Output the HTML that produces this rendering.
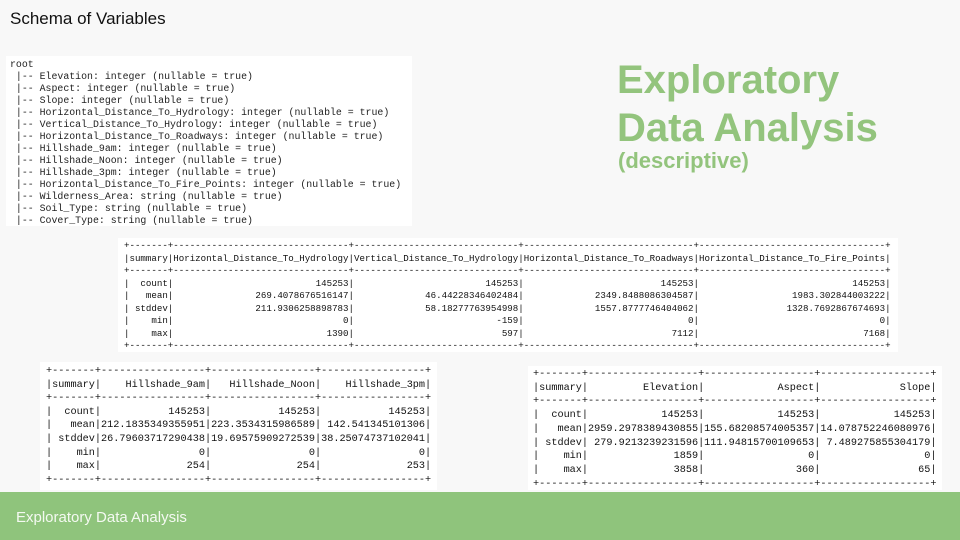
<!DOCTYPE html>
<html><head><meta charset="utf-8"><style>
body{margin:0;width:960px;height:540px;background:#f8f8f8;position:relative;overflow:hidden;font-family:"Liberation Sans",sans-serif}
.a{position:absolute}
pre{margin:0;font-family:"Liberation Mono",monospace;color:#111;white-space:pre}
.box{position:absolute;background:#fff}
</style></head><body>
<div class="a" style="left:10px;top:9px;font-size:17px;color:#111">Schema of Variables</div>
<div class="box" style="left:6px;top:56px;width:406px;height:170px"></div>
<pre class="a" style="left:10px;top:59px;font-size:9.9px;line-height:12px;color:#222">root
 |-- Elevation: integer (nullable = true)
 |-- Aspect: integer (nullable = true)
 |-- Slope: integer (nullable = true)
 |-- Horizontal_Distance_To_Hydrology: integer (nullable = true)
 |-- Vertical_Distance_To_Hydrology: integer (nullable = true)
 |-- Horizontal_Distance_To_Roadways: integer (nullable = true)
 |-- Hillshade_9am: integer (nullable = true)
 |-- Hillshade_Noon: integer (nullable = true)
 |-- Hillshade_3pm: integer (nullable = true)
 |-- Horizontal_Distance_To_Fire_Points: integer (nullable = true)
 |-- Wilderness_Area: string (nullable = true)
 |-- Soil_Type: string (nullable = true)
 |-- Cover_Type: string (nullable = true)</pre>
<div class="a" style="left:617px;top:56px;font-size:40px;font-weight:bold;color:#93c47d;line-height:48px">Exploratory<br>Data Analysis</div>
<div class="a" style="left:618px;top:148px;font-size:22px;font-weight:bold;color:#93c47d">(descriptive)</div>

<div class="box" style="left:118px;top:238px;width:780px;height:114px"></div>
<pre class="a" style="left:124px;top:240px;font-size:9.15px;line-height:12.5px">+-------+--------------------------------+------------------------------+-------------------------------+----------------------------------+
|summary|Horizontal_Distance_To_Hydrology|Vertical_Distance_To_Hydrology|Horizontal_Distance_To_Roadways|Horizontal_Distance_To_Fire_Points|
+-------+--------------------------------+------------------------------+-------------------------------+----------------------------------+
|  count|                          145253|                        145253|                         145253|                            145253|
|   mean|               269.4078676516147|             46.44228346402484|             2349.8488086304587|                 1983.302844003222|
| stddev|               211.9306258898783|             58.18277763954998|             1557.8777746404062|                1328.7692867674693|
|    min|                               0|                          -159|                              0|                                 0|
|    max|                            1390|                           597|                           7112|                              7168|
+-------+--------------------------------+------------------------------+-------------------------------+----------------------------------+</pre>

<div class="box" style="left:40px;top:362px;width:397px;height:128px"></div>
<pre class="a" style="left:46px;top:365px;font-size:10.2px;line-height:13.6px">+-------+-----------------+-----------------+-----------------+
|summary|    Hillshade_9am|   Hillshade_Noon|    Hillshade_3pm|
+-------+-----------------+-----------------+-----------------+
|  count|           145253|           145253|           145253|
|   mean|212.1835349355951|223.3534315986589| 142.541345101306|
| stddev|26.79603717290438|19.69575909272539|38.25074737102041|
|    min|                0|                0|                0|
|    max|              254|              254|              253|
+-------+-----------------+-----------------+-----------------+</pre>

<div class="box" style="left:528px;top:366px;width:414px;height:124px"></div>
<pre class="a" style="left:533px;top:368px;font-size:10.2px;line-height:13.7px">+-------+------------------+------------------+------------------+
|summary|         Elevation|            Aspect|             Slope|
+-------+------------------+------------------+------------------+
|  count|            145253|            145253|            145253|
|   mean|2959.2978389430855|155.68208574005357|14.078752246080976|
| stddev| 279.9213239231596|111.94815700109653| 7.489275855304179|
|    min|              1859|                 0|                 0|
|    max|              3858|               360|                65|
+-------+------------------+------------------+------------------+</pre>

<div class="a" style="left:0;top:492px;width:960px;height:48px;background:#8fc47c"></div>
<div class="a" style="left:16px;top:509px;font-size:15px;color:#f4f9f1">Exploratory Data Analysis</div>
</body></html>
